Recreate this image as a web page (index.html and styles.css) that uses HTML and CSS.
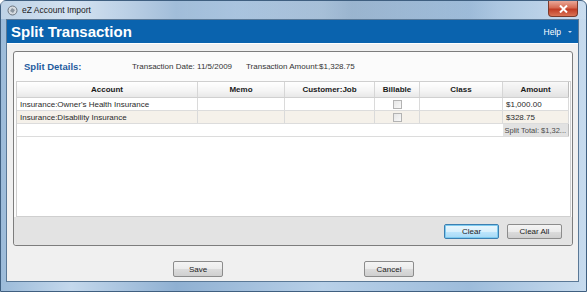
FILE: index.html
```html
<!DOCTYPE html>
<html lang="en">
<head>
    <meta charset="UTF-8">
    <title>eZ Account Import</title>
    <link rel="stylesheet" href="styles.css">
</head>
<body>

<div class="window">
    <div class="titlebar">
        <svg class="app-icon" width="11" height="11" viewBox="0 0 11 11">
            <circle cx="5.5" cy="5.5" r="4.5" fill="#d6dbe0" stroke="#6b7580" stroke-width="1"/>
            <path d="M3 6 L5 3 L8 5 L6 8 Z" fill="#8a949e"/>
        </svg>
        <span class="title">eZ Account Import</span>
        <div class="close">
            <svg width="9" height="8" viewBox="0 0 9 8">
                <path d="M1 0.5 L8 7.5 M8 0.5 L1 7.5" stroke="#ffffff" stroke-width="2"/>
            </svg>
        </div>
    </div>

    <div class="client">
        <div class="banner">
            <h1>Split Transaction</h1>
            <span class="help">Help</span>
            <span class="help-arrow"></span>
        </div>

        <div class="content">
            <div class="panel">
                <div class="details">
                    <span class="details-label">Split Details:</span>
                    <span class="details-date">Transaction Date: 11/5/2009</span>
                    <span class="details-amount">Transaction Amount:$1,328.75</span>
                </div>

                <div class="grid">
                    <table>
                        <tr class="head">
                            <th class="c-account">Account</th>
                            <th class="c-memo">Memo</th>
                            <th class="c-job">Customer:Job</th>
                            <th class="c-bill">Billable</th>
                            <th class="c-class">Class</th>
                            <th class="c-amount">Amount</th>
                        </tr>
                        <tr>
                            <td>Insurance:Owner's Health Insurance</td>
                            <td></td>
                            <td></td>
                            <td class="check-cell"><span class="check"></span></td>
                            <td></td>
                            <td>$1,000.00</td>
                        </tr>
                        <tr class="alt">
                            <td>Insurance:Disability Insurance</td>
                            <td></td>
                            <td></td>
                            <td class="check-cell"><span class="check"></span></td>
                            <td></td>
                            <td>$328.75</td>
                        </tr>
                        <tr class="total">
                            <td colspan="5"></td>
                            <td class="total-cell">Split Total: $1,32...</td>
                        </tr>
                    </table>
                </div>

                <div class="panel-buttons">
                    <button class="btn btn-focus">Clear</button>
                    <button class="btn">Clear All</button>
                </div>
            </div>
        </div>

        <div class="footer">
            <button class="btn btn-wide">Save</button>
            <button class="btn btn-wide">Cancel</button>
        </div>
    </div>
</div>

</body>
</html>
```

FILE: styles.css
```css
body {
    margin: 0;
    font-family: 'Liberation Sans', Arial, sans-serif;
    color: #222222;
    overflow: hidden;
}
.window {
    width: 587px;
    height: 292px;
    box-sizing: border-box;
    display: flex;
    flex-direction: column;
    padding: 0 7px 9px 5px;
    background: linear-gradient(90deg, #9cbbd9 0%, #c4d8ec 12%, #8fb0d2 30%, #b8d0e8 55%, #9dbcdb 80%, #c7dbee 100%);
    border: 1px solid #3f5f80;
    border-radius: 6px 6px 0 0;
}
.titlebar {
    height: 18px;
    display: flex;
    align-items: center;
    background: linear-gradient(90deg, rgba(255,255,255,0.35) 0%, rgba(255,255,255,0.1) 40%, rgba(80,110,140,0.25) 60%, rgba(255,255,255,0.05) 85%);
    margin: 0 -7px 0 -5px;
    padding: 0 8px 0 6px;
}
.app-icon {
    margin-right: 4px;
}
.title {
    font-size: 8.5px;
    color: #1a1a1a;
}
.close {
    margin-left: auto;
    align-self: flex-start;
    width: 30px;
    height: 16px;
    display: flex;
    align-items: center;
    justify-content: center;
    background: linear-gradient(180deg, #eaa898 0%, #d56a52 45%, #c03c24 55%, #da7456 100%);
    border: 1px solid #7a3a2c;
    border-top: none;
    border-radius: 0 0 4px 4px;
    box-sizing: border-box;
}
.client {
    flex: 1;
    display: flex;
    flex-direction: column;
    background: #f0f0f0;
    border: 1px solid #5a7896;
}
.banner {
    height: 23px;
    display: flex;
    align-items: center;
    background: #0a63ae;
    padding: 0 6px 0 4px;
    border-bottom: 1px solid #ffffff;
}
.banner h1 {
    margin: 0;
    font-size: 15px;
    font-weight: bold;
    color: #ffffff;
}
.help {
    margin-left: auto;
    font-size: 8.5px;
    color: #ffffff;
}
.help-arrow {
    margin-left: 7px;
    width: 0;
    height: 0;
    border-left: 2px solid transparent;
    border-right: 2px solid transparent;
    border-top: 2px solid #c8daf0;
}
.content {
    padding: 7px 5px 0 6px;
}
.panel {
    border: 1px solid #7d7d7d;
    border-radius: 3px;
    background: #fbfbfb;
    padding: 0 1px 0 2px;
}
.details {
    height: 29px;
    display: flex;
    align-items: center;
    padding-left: 8px;
    font-size: 8px;
    color: #333333;
}
.details-label {
    font-size: 9.5px;
    font-weight: bold;
    color: #1f5c9e;
    width: 108px;
}
.details-date {
    width: 114px;
}
.grid {
    height: 136px;
    background: #ffffff;
    border: 1px solid #cfcfcf;
    box-sizing: border-box;
}
table {
    border-collapse: collapse;
    width: 552px;
    table-layout: fixed;
    font-size: 8px;
}
th {
    height: 15px;
    font-weight: bold;
    color: #1a1a1a;
    background: linear-gradient(180deg, #ffffff 0%, #f4f4f4 60%, #e8e8e8 100%);
    border-right: 1px solid #d6d6d6;
    border-bottom: 1px solid #d0d0d0;
    padding: 0;
}
th.c-amount {
    background: linear-gradient(180deg, #f8f8f8 0%, #ececec 60%, #e2e2e2 100%);
    border-right: 1px solid #bdbdbd;
}
.c-account { width: 180px; }
.c-memo { width: 86px; }
.c-job { width: 89px; }
.c-bill { width: 44px; }
.c-class { width: 82px; }
td {
    height: 12px;
    padding: 0 3px;
    border-right: 1px solid #dadada;
    border-bottom: 1px solid #dcdcdc;
    color: #2a2a2a;
    white-space: nowrap;
    overflow: hidden;
}
tr.alt td {
    background: #f5f1ea;
}
tr.total td {
    border-right: none;
    background: #ffffff;
}
tr.total td.total-cell {
    padding: 0 1px 0 2px;
    font-size: 7.5px;
    background: #e2e2e2;
    color: #4a4a4a;
    border-right: 1px solid #bdbdbd;
}
.check-cell {
    text-align: center;
}
.check {
    display: inline-block;
    width: 7px;
    height: 7px;
    border: 1px solid #b3b3b3;
    background: linear-gradient(135deg, #e6e6e6, #f8f8f8);
    vertical-align: middle;
}
.panel-buttons {
    height: 28px;
    display: flex;
    align-items: center;
    justify-content: flex-end;
    gap: 8px;
    padding-right: 10px;
    background: #e3e3e3;
    margin: 0 -1px 0 -2px;
    border-radius: 0 0 3px 3px;
}
.btn {
    height: 15px;
    width: 55px;
    padding: 0;
    font-family: 'Liberation Sans', Arial, sans-serif;
    font-size: 8px;
    color: #222222;
    border: 1px solid #8c8c8c;
    border-radius: 2px;
    background: linear-gradient(180deg, #f4f4f4 0%, #ebebeb 50%, #dcdcdc 51%, #cfcfcf 100%);
}
.btn-focus {
    border-color: #3c7fb1;
    background: linear-gradient(180deg, #eaf6fd 0%, #d9f0fc 50%, #bee6fd 51%, #a7d9f5 100%);
    box-shadow: inset 0 0 0 1px #7ecbf0;
}
.footer {
    flex: 1;
    display: flex;
    justify-content: center;
    gap: 141px;
    padding-top: 15px;
    padding-left: 2px;
}
.btn-wide {
    width: 50px;
    height: 16px;
}
```
